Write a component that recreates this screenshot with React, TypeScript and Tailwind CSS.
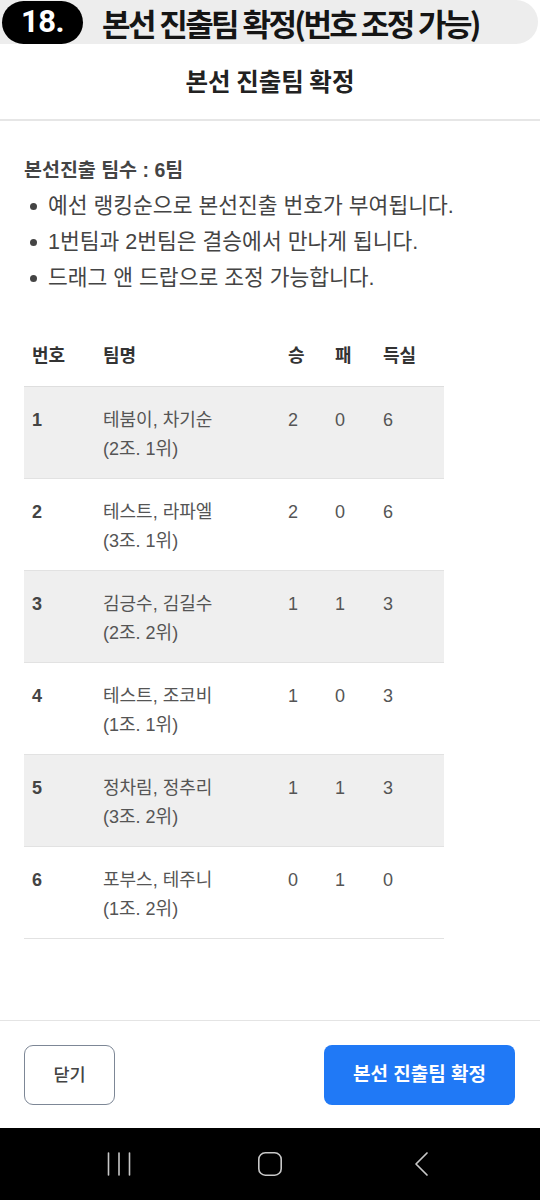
import React from "react";

const KR = '"Liberation Sans", "Noto Sans CJK KR", "Noto Sans", sans-serif';
const KRB = '"Noto Sans CJK KR", "Noto Sans", sans-serif';

const rows = [
  { no: 1, name: "테붐이, 차기순", sub: "(2조. 1위)", w: 2, l: 0, d: 6 },
  { no: 2, name: "테스트, 라파엘", sub: "(3조. 1위)", w: 2, l: 0, d: 6 },
  { no: 3, name: "김긍수, 김길수", sub: "(2조. 2위)", w: 1, l: 1, d: 3 },
  { no: 4, name: "테스트, 조코비", sub: "(1조. 1위)", w: 1, l: 0, d: 3 },
  { no: 5, name: "정차림, 정추리", sub: "(3조. 2위)", w: 1, l: 1, d: 3 },
  { no: 6, name: "포부스, 테주니", sub: "(1조. 2위)", w: 0, l: 1, d: 0 },
];

export default function App() {
  return (
    <div
      className="w-[540px] h-[1200px] bg-white flex flex-col overflow-hidden"
      style={{ fontFamily: KR }}
    >
      {/* Top banner */}
      <div className="h-[44px] mr-[2px] bg-[#ededed] rounded-r-full flex items-center shrink-0">
        <div
          className="ml-[2px] w-[81px] h-[43px] rounded-full bg-black text-white flex items-center justify-center text-[31px] font-bold tracking-[-0.5px]"
          style={{ fontFamily: 'Roboto, "Noto Sans", sans-serif' }}
        >
          18.
        </div>
        <div
          className="ml-[19px] text-[31px] font-bold text-[#151515] tracking-[-2.6px] [word-spacing:1px] leading-none"
          style={{ fontFamily: KRB }}
        >
          본선 진출팀 확정(번호 조정 가능)
        </div>
      </div>

      {/* Modal title */}
      <div className="h-[75px] flex items-center justify-center shrink-0">
        <span className="text-[24.5px] font-bold text-[#222]" style={{ fontFamily: KRB }}>
          본선 진출팀 확정
        </span>
      </div>
      <div className="h-[2px] bg-[#e6e6e6] shrink-0" />

      {/* Content */}
      <div className="flex-1 px-[24px] pt-[31px]">
        <div className="text-[19.5px] font-bold text-[#444] leading-[36px]">
          본선진출 팀수 : 6팀
        </div>
        <ul className="text-[21.5px] text-[#444] leading-[36px]">
          {[
            "예선 랭킹순으로 본선진출 번호가 부여됩니다.",
            "1번팀과 2번팀은 결승에서 만나게 됩니다.",
            "드래그 앤 드랍으로 조정 가능합니다.",
          ].map((t) => (
            <li key={t} className="flex items-center">
              <span className="w-[7px] h-[7px] rounded-full bg-[#444] ml-[6px] mr-[11px] shrink-0" />
              <span>{t}</span>
            </li>
          ))}
        </ul>

        <div className="mt-[29px] w-[420px]">
          <div className="grid grid-cols-[79px_185px_47px_48px_61px] h-[62px] items-center pt-[2px] text-[18px] font-bold text-[#333] border-b border-[#dedede]">
            <div className="pl-[8px]">번호</div>
            <div>팀명</div>
            <div>승</div>
            <div>패</div>
            <div>득실</div>
          </div>
          {rows.map((r, i) => (
            <div
              key={r.no}
              className={`grid grid-cols-[79px_185px_47px_48px_61px] h-[92px] pt-[19px] border-b border-[#e2e2e2] text-[18px] leading-[29px] ${
                i % 2 === 0 ? "bg-[#efefef]" : "bg-white"
              }`}
            >
              <div className="pl-[8px] font-bold text-[#444]">{r.no}</div>
              <div className="text-[#555]">
                <div>{r.name}</div>
                <div>{r.sub}</div>
              </div>
              <div className="text-[#555]">{r.w}</div>
              <div className="text-[#555]">{r.l}</div>
              <div className="text-[#555]">{r.d}</div>
            </div>
          ))}
        </div>
      </div>

      {/* Footer */}
      <div className="h-px bg-[#e4e4e4] shrink-0" />
      <div className="h-[107px] pl-[24px] pr-[25px] flex items-center justify-between shrink-0 pt-[1px]">
        <button className="w-[91px] h-[60px] rounded-[9px] border-[1.5px] border-[#7d8796] text-[17.5px] text-[#444] font-medium bg-white">
          닫기
        </button>
        <button className="w-[191px] h-[60px] rounded-[8px] bg-[#2079f6] text-white text-[19px] font-bold">
          본선 진출팀 확정
        </button>
      </div>

      {/* Android nav bar */}
      <div className="h-[72px] bg-black flex items-center shrink-0 relative">
        <svg className="absolute left-[104px] top-[23px]" width="30" height="26" viewBox="0 0 30 26">
          <g stroke="#c8c8c8" strokeWidth="1.6" strokeLinecap="round">
            <line x1="4.5" y1="2" x2="4.5" y2="24" />
            <line x1="15" y1="2" x2="15" y2="24" />
            <line x1="25.5" y1="2" x2="25.5" y2="24" />
          </g>
        </svg>
        <svg className="absolute left-[256px] top-[23px]" width="28" height="26" viewBox="0 0 28 26">
          <rect x="2.8" y="1.8" width="22.4" height="22.4" rx="6.5" fill="none" stroke="#c8c8c8" strokeWidth="1.6" />
        </svg>
        <svg className="absolute left-[411px] top-[23px]" width="20" height="28" viewBox="0 0 20 28">
          <polyline points="16,2 5,13 16,24" fill="none" stroke="#c8c8c8" strokeWidth="1.7" strokeLinecap="round" strokeLinejoin="round" />
        </svg>
      </div>
    </div>
  );
}
